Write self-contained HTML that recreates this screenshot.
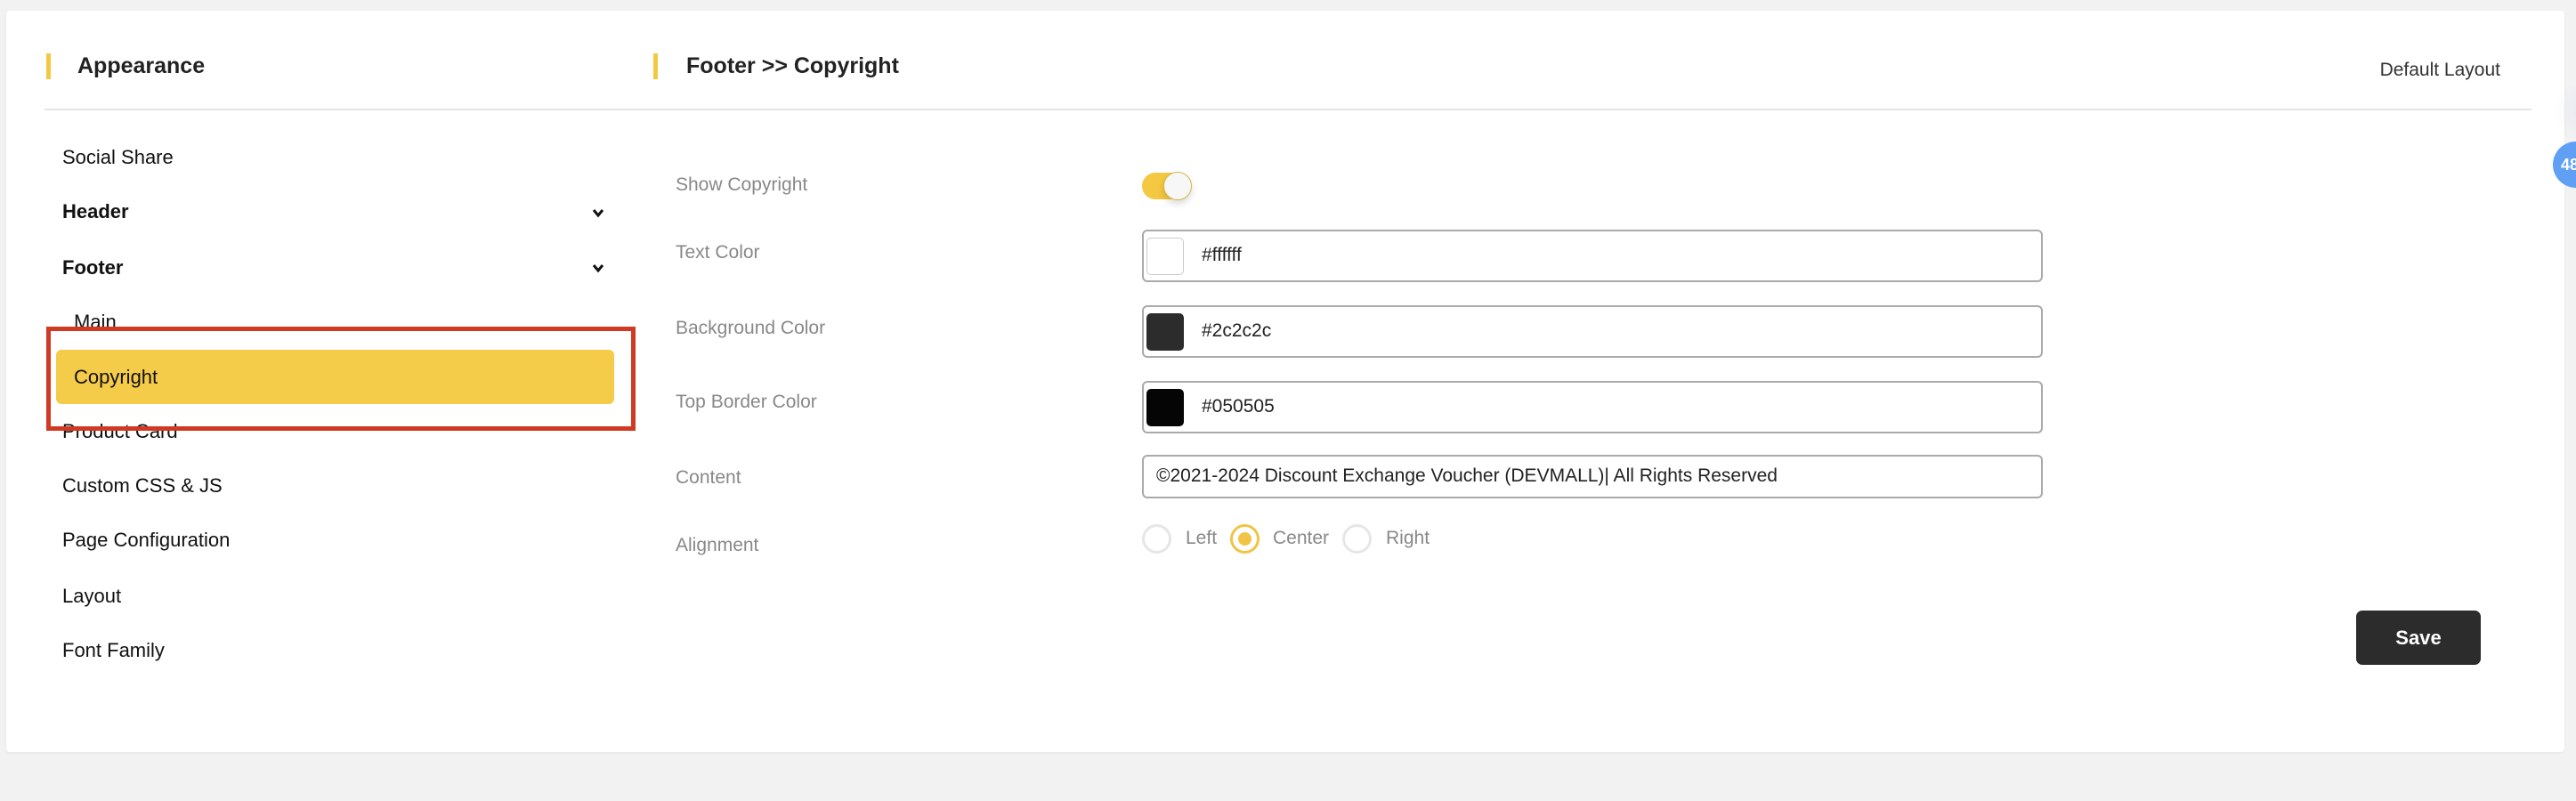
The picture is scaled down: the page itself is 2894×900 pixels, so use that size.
<!DOCTYPE html>
<html><head><meta charset="utf-8"><style>
*{box-sizing:border-box;margin:0;padding:0}
body{width:2894px;height:900px;background:#f2f2f2;font-family:"Liberation Sans",sans-serif;position:relative;overflow:hidden}
.card{position:absolute;left:7px;top:12px;width:2874px;height:833px;background:#fff;border-radius:4px;box-shadow:0 1px 3px rgba(0,0,0,.06)}
.a{position:absolute;white-space:nowrap}
.bar{position:absolute;width:5px;height:29px;background:#f5c842;top:60px}
.h{font-size:25px;font-weight:bold;color:#222;top:60px;line-height:29px}
.side{font-size:22px;color:#111;left:70px;line-height:30px}
.lbl{font-size:21px;color:#888;left:759px;line-height:30px}
.inp{position:absolute;left:1283px;width:1012px;border:2px solid #aaa;border-radius:6px}
.sw{position:absolute;left:3px;width:42px;height:42px;border-radius:5px}
.hex{position:absolute;left:65px;font-size:21px;color:#222}
.rad{position:absolute;top:589px;width:33px;height:33px;border-radius:50%;border:3px solid #e6e6e6}
.rt{font-size:21px;color:#888;top:590px;line-height:30px}
.chev{position:absolute;left:664px;width:16px;height:12px}
</style></head><body>
<div class="card"></div>
<div class="bar" style="left:52px"></div>
<div class="a h" style="left:87px">Appearance</div>
<div class="bar" style="left:734px"></div>
<div class="a h" style="left:771px">Footer &gt;&gt; Copyright</div>
<div class="a" style="right:85px;top:64px;font-size:21px;color:#333;line-height:30px">Default Layout</div>
<div class="a" style="left:50px;top:122px;width:2794px;height:2px;background:#e4e4e4"></div>

<div class="a side" style="top:162px">Social Share</div>
<div class="a side" style="top:223px;font-weight:bold">Header</div>
<svg class="chev" style="top:233px" viewBox="0 0 16 12"><path d="M3 3l5 6 5-6" fill="none" stroke="#111" stroke-width="3"/></svg>
<div class="a side" style="top:286px;font-weight:bold">Footer</div>
<svg class="chev" style="top:295px" viewBox="0 0 16 12"><path d="M3 3l5 6 5-6" fill="none" stroke="#111" stroke-width="3"/></svg>
<div class="a side" style="top:347px;left:83px">Main</div>
<div class="a" style="left:63px;top:393px;width:627px;height:61px;background:#f5cb4a;border-radius:6px"></div>
<div class="a side" style="top:409px;left:83px">Copyright</div>
<div class="a side" style="top:470px">Product Card</div>
<div class="a" style="left:52px;top:367px;width:662px;height:117px;border:5px solid #d03a22"></div>
<div class="a side" style="top:531px">Custom CSS &amp; JS</div>
<div class="a side" style="top:592px">Page Configuration</div>
<div class="a side" style="top:655px">Layout</div>
<div class="a side" style="top:716px">Font Family</div>

<div class="a lbl" style="top:193px">Show Copyright</div>
<div class="a lbl" style="top:269px">Text Color</div>
<div class="a lbl" style="top:354px">Background Color</div>
<div class="a lbl" style="top:437px">Top Border Color</div>
<div class="a lbl" style="top:522px">Content</div>
<div class="a lbl" style="top:598px">Alignment</div>

<div class="a" style="left:1283px;top:194px;width:55px;height:30px;border-radius:15px;background:#f5c842"></div>
<div class="a" style="left:1307px;top:193px;width:32px;height:32px;border-radius:50%;background:#f7f7f7;border:1px solid #d8b64a;box-shadow:0 4px 8px rgba(0,0,0,.15)"></div>

<div class="inp" style="top:258px;height:59px"><div class="sw" style="top:7px;border:1px solid #ccc;background:#fff"></div><div class="hex" style="top:15px">#ffffff</div></div>
<div class="inp" style="top:343px;height:59px"><div class="sw" style="top:7px;background:#2c2c2c"></div><div class="hex" style="top:15px">#2c2c2c</div></div>
<div class="inp" style="top:428px;height:59px"><div class="sw" style="top:7px;background:#050505"></div><div class="hex" style="top:15px">#050505</div></div>
<div class="inp" style="top:511px;height:49px"><div class="hex" style="left:14px;top:10px">©2021-2024 Discount Exchange Voucher (DEVMALL)| All Rights Reserved</div></div>

<div class="rad" style="left:1283px"></div>
<div class="a rt" style="left:1332px">Left</div>
<div class="rad" style="left:1382px;border-color:#f0c445"><div style="position:absolute;left:6px;top:6px;width:15px;height:15px;border-radius:50%;background:#f0c445"></div></div>
<div class="a rt" style="left:1430px">Center</div>
<div class="rad" style="left:1508px"></div>
<div class="a rt" style="left:1557px">Right</div>

<div class="a" style="left:2647px;top:686px;width:140px;height:61px;background:#2c2c2c;border-radius:7px;color:#fff;font-weight:bold;font-size:22px;text-align:center;line-height:61px">Save</div>

<div class="a" style="left:2868px;top:90px;width:70px;height:70px;border-radius:50%;background:radial-gradient(rgba(200,210,240,.25),rgba(255,255,255,0) 70%)"></div>
<div class="a" style="left:2868px;top:159px;width:52px;height:52px;border-radius:50%;background:#5fa0f5;color:#fff;font-weight:bold;font-size:18px;line-height:52px;padding-left:9px">48</div>
</body></html>
